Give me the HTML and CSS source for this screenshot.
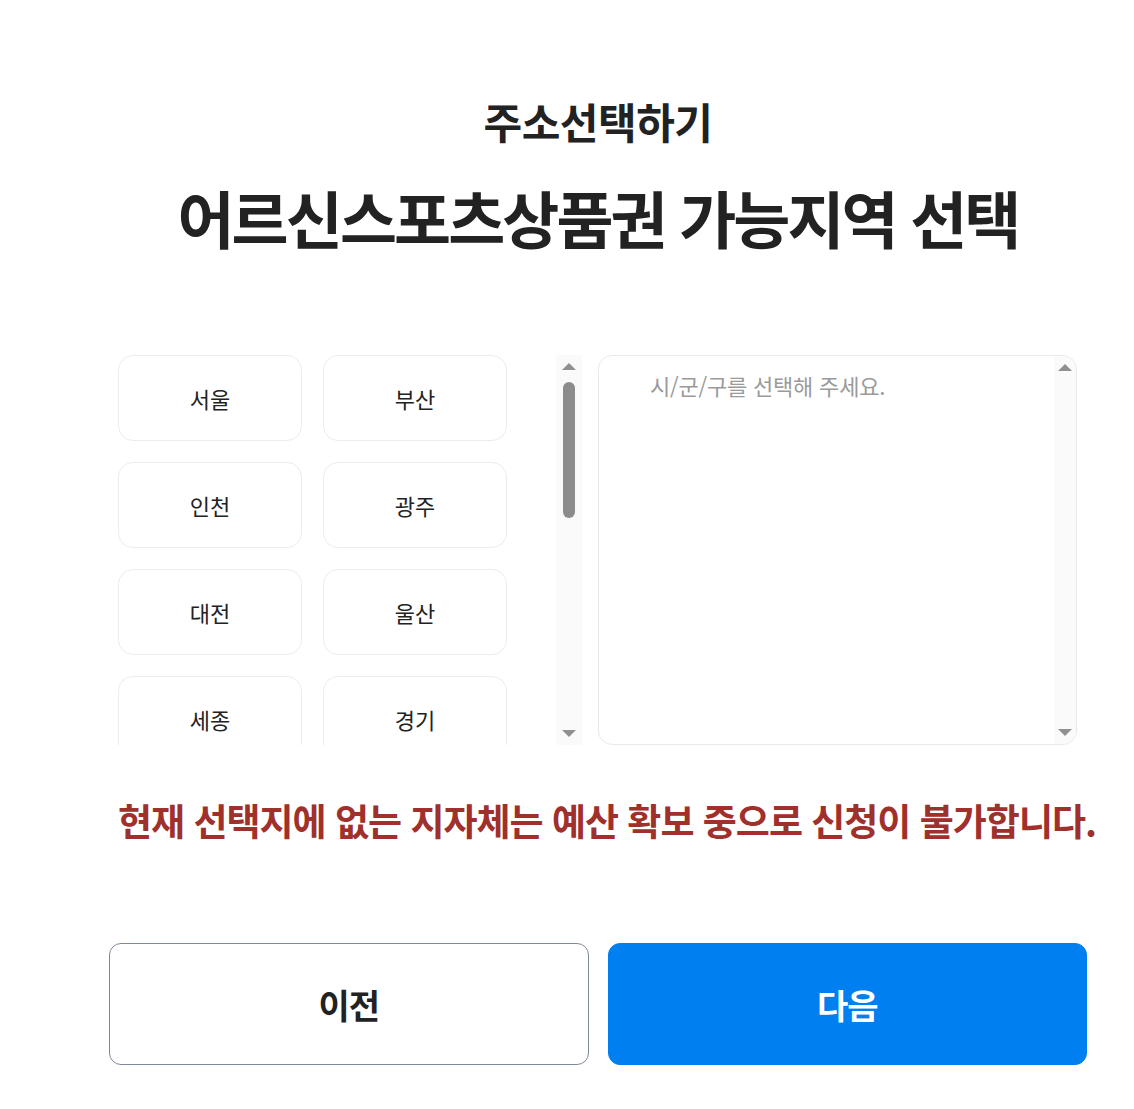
FILE: index.html
```html
<!DOCTYPE html>
<html lang="ko">
<head>
<meta charset="utf-8">
<title>주소선택하기</title>
<link rel="stylesheet" href="styles.css">
</head>
<body>
<div class="wrap">
  <h2 class="subtitle">주소선택하기</h2>
  <h1 class="title">어르신스포츠상품권 가능지역 선택</h1>

  <div class="picker">
    <div class="left">
      <div class="grid-view">
        <div class="grid">
          <button class="region">서울</button>
          <button class="region">부산</button>
          <button class="region">인천</button>
          <button class="region">광주</button>
          <button class="region">대전</button>
          <button class="region">울산</button>
          <button class="region">세종</button>
          <button class="region">경기</button>
        </div>
      </div>
      <div class="sbar">
        <span class="arr up"></span>
        <div class="track"><div class="thumb"></div></div>
        <span class="arr down"></span>
      </div>
    </div>
    <div class="right">
      <div class="placeholder">시/군/구를 선택해 주세요.</div>
      <div class="sbar sbar-in">
        <span class="arr up"></span>
        <div class="track"></div>
        <span class="arr down"></span>
      </div>
    </div>
  </div>

  <p class="notice">현재 선택지에 없는 지자체는 예산 확보 중으로 신청이 불가합니다.</p>

  <div class="actions">
    <button class="btn prev">이전</button>
    <button class="btn next">다음</button>
  </div>
</div>
</body>
</html>
```

FILE: styles.css
```css
* { box-sizing: border-box; }
html, body { margin: 0; padding: 0; background: #fff; }
body {
  font-family: "Noto Sans CJK KR", "Noto Sans", sans-serif;
  color: #222;
}
.wrap {
  width: 978px;
  margin-left: 109px;
  padding-top: 91px;
}
.subtitle {
  margin: 0;
  text-align: center;
  font-size: 42px;
  font-weight: 700;
  line-height: 60px;
  letter-spacing: -0.5px;
  color: #222;
}
.title {
  margin: 26px 0 0;
  text-align: center;
  font-size: 62px;
  font-weight: 700;
  line-height: 80px;
  letter-spacing: -2.9px;
  color: #222;
}
.picker {
  display: flex;
  gap: 16px;
  margin-top: 98px;
  padding-left: 9px;
  height: 390px;
}
.left {
  display: flex;
  width: 464px;
  height: 390px;
}
.grid-view {
  width: 438px;
  height: 390px;
  overflow: hidden;
}
.grid {
  display: grid;
  grid-template-columns: 184px 184px;
  column-gap: 21px;
  row-gap: 21px;
}
.region {
  height: 86px;
  border: 1px solid #ececec;
  border-radius: 15px;
  background: #fff;
  font-family: inherit;
  font-size: 22px;
  color: #222;
  letter-spacing: 0;
}
.sbar {
  width: 26px;
  height: 390px;
  background: #fafafa;
  display: flex;
  flex-direction: column;
  align-items: center;
}
.arr {
  width: 0;
  height: 0;
  border-left: 7px solid transparent;
  border-right: 7px solid transparent;
  flex: none;
}
.arr.up {
  border-bottom: 7px solid #909090;
  margin-top: 8px;
}
.arr.down {
  border-top: 7px solid #909090;
  margin-bottom: 8px;
}
.track {
  flex: 1;
  width: 100%;
  display: flex;
  justify-content: center;
  padding-top: 12px;
}
.thumb {
  width: 12px;
  height: 136px;
  border-radius: 6px;
  background: #8c8c8c;
}
.right {
  width: 479px;
  height: 390px;
  border: 1px solid #e9e9e9;
  border-radius: 14px;
  display: flex;
  justify-content: space-between;
  overflow: hidden;
}
.placeholder {
  padding: 14px 0 0 51px;
  font-size: 22px;
  color: #9a9a9a;
  letter-spacing: -0.2px;
  line-height: 30px;
}
.sbar-in {
  width: 22px;
  height: 388px;
}
.notice {
  margin: 50px 0 0 9px;
  font-size: 37px;
  font-weight: 700;
  color: #a0302c;
  letter-spacing: -1px;
  line-height: 50px;
  white-space: nowrap;
}
.actions {
  display: flex;
  gap: 19px;
  margin-top: 98px;
}
.btn {
  width: 480px;
  height: 122px;
  border-radius: 12px;
  font-family: inherit;
  font-size: 34px;
  font-weight: 700;
  letter-spacing: -1px;
}
.prev {
  background: #fff;
  border: 1px solid #7d8898;
  color: #222;
}
.next {
  background: #0080f0;
  border: 1px solid #0080f0;
  color: #fff;
}
```
